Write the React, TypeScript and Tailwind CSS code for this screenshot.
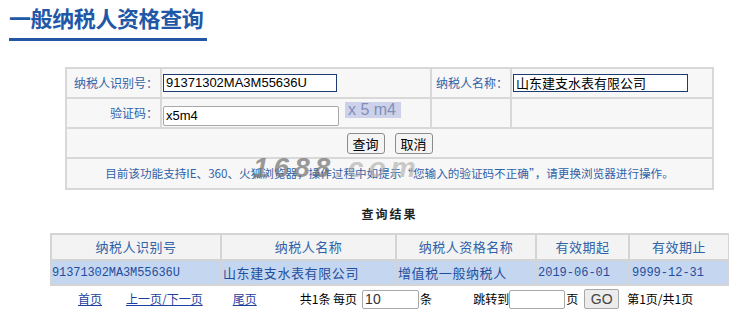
import React from "react";

const cjk = "font-['Noto_Sans_CJK_SC','Noto_Sans',sans-serif]";
const mono = "font-['Liberation_Mono','Noto_Sans_CJK_SC',monospace]";

const headers = ["纳税人识别号", "纳税人名称", "纳税人资格名称", "有效期起", "有效期止"];
const widths = ["w-[170px]", "w-[175px]", "w-[140px]", "w-[93px]", "w-[100px]"];

const App: React.FC = () => {
	return (
		<div className={`w-[729px] h-[331px] overflow-hidden bg-white ${cjk}`}>
			{/* Title */}
			<div className="pl-[9px] pt-[4px]">
				<h1 className="text-[22px] leading-[26px] font-bold text-[#1f58a6] tracking-[-0.4px]">
					一般纳税人资格查询
				</h1>
				<div className="mt-[8px] w-[198px] h-[3px] bg-[#2456a4]"></div>
			</div>

			{/* Query form */}
			<div className="relative ml-[65px] mt-[26px] w-[649px]">
				<table className="w-full border-collapse text-[12px] bg-[#f7f7f7]">
					<tbody>
						<tr className="h-[30px]">
							<td className="w-[95px] border-2 border-[#d8d8d8] text-right pr-[2px] text-[#2f62a8]">
								纳税人识别号：
							</td>
							<td className="w-[270px] border-2 border-[#d8d8d8] pl-[1px]">
								<div className="w-[174px] h-[18px] border border-[#1c3b6e] bg-white text-[13px] leading-[16px] pl-[2px] text-black font-['Liberation_Sans',sans-serif]">
									91371302MA3M55636U
								</div>
							</td>
							<td className="w-[80px] border-2 border-[#d8d8d8] text-right pr-[2px] text-[#2f62a8]">
								纳税人名称：
							</td>
							<td className="border-2 border-[#d8d8d8] pl-[1px]">
								<div className="w-[175px] h-[18px] border border-[#1c3b6e] bg-white text-[13px] leading-[16px] pl-[2px] text-black">
									山东建支水表有限公司
								</div>
							</td>
						</tr>
						<tr className="h-[30px]">
							<td className="border-2 border-[#d8d8d8] text-right pr-[2px] text-[#2f62a8]">
								验证码：
							</td>
							<td className="border-2 border-[#d8d8d8] pl-[1px]">
								<div className="flex items-start gap-[6px]">
									<div className="mt-[6px] w-[176px] h-[20px] border border-[#a8a8a8] rounded-[2px] bg-white text-[13px] leading-[18px] pl-[2px] text-black font-['Liberation_Sans',sans-serif]">
										x5m4
									</div>
									<div className="mt-[2px] w-[56px] h-[16px] bg-[#cdd2ea] text-[#7f8fb8] text-[16px] leading-[16px] font-light pl-[3px] whitespace-nowrap font-['Liberation_Sans',sans-serif]">
										x 5 m4
									</div>
								</div>
							</td>
							<td className="border-2 border-[#d8d8d8]"></td>
							<td className="border-2 border-[#d8d8d8]"></td>
						</tr>
						<tr className="h-[30px]">
							<td colSpan={4} className="border-2 border-[#d8d8d8]">
								<div className="flex justify-center gap-[10px]">
									<button className="w-[38px] h-[21px] border border-[#8c8c8c] rounded-[3px] bg-[#f4f4f4] text-[13px] leading-[19px] text-black">
										查询
									</button>
									<button className="w-[38px] h-[21px] border border-[#8c8c8c] rounded-[3px] bg-[#f4f4f4] text-[13px] leading-[19px] text-black">
										取消
									</button>
								</div>
							</td>
						</tr>
						<tr className="h-[31px]">
							<td colSpan={4} className="border-2 border-[#d8d8d8] text-center text-[#2f62a8] text-[11.6px]">
								目前该功能支持IE、360、火狐浏览器，操作过程中如提示“您输入的验证码不正确”，请更换浏览器进行操作。
							</td>
						</tr>
					</tbody>
				</table>
				{/* watermark */}
				<div className="absolute left-[188px] top-[86px] italic font-bold text-[28px] leading-[30px] tracking-[5px] whitespace-nowrap font-['Liberation_Sans',sans-serif] pointer-events-none">
					<span className="text-[#6e6e6e]/70">1688</span>
					<span className="text-[#a8a8a8]/60">.com</span>
				</div>
			</div>

			{/* Results */}
			<div className="ml-[50px] w-[679px]">
				<div className="mt-[17px] text-center text-[12px] font-bold text-[#222] tracking-[2px] leading-[14px]">
					查询结果
				</div>
				<table className="mt-[12px] w-full border-collapse table-fixed">
					<thead>
						<tr className="h-[26px] bg-[#f3f3f3]">
							{headers.map((h, i) => (
								<th
									key={h}
									className={`${widths[i]} border-2 border-[#d4d4d4] font-normal text-[13px] text-[#2f62a8] text-center tracking-[0.5px]`}
								>
									{h}
								</th>
							))}
						</tr>
					</thead>
					<tbody>
						<tr className="h-[25px] bg-[#c5d6f1] text-[#1f4f9c] text-[13px]">
							<td className={`border-2 border-[#d4d4d4] text-[12px] tracking-[-0.1px] ${mono}`}>
								91371302MA3M55636U
							</td>
							<td className="border-2 border-[#d4d4d4] pl-[1px] tracking-[0.6px]">山东建支水表有限公司</td>
							<td className="border-2 border-[#d4d4d4] pl-[1px] tracking-[0.6px]">增值税一般纳税人</td>
							<td className={`border-2 border-[#d4d4d4] pl-[1px] text-[12px] ${mono}`}>2019-06-01</td>
							<td className={`border-2 border-[#d4d4d4] pl-[2px] text-[12px] ${mono}`}>9999-12-31</td>
						</tr>
					</tbody>
				</table>
			</div>

			{/* Pagination */}
			<div className="flex items-center h-[22px] mt-[2px] text-[12px] text-black">
				<a className="ml-[78px] text-[#1f3f9e] underline">首页</a>
				<a className="ml-[24px] text-[#1f3f9e] underline">上一页/下一页</a>
				<a className="ml-[30px] text-[#1f3f9e] underline">尾页</a>
				<span className="ml-[43px]">共1条 每页</span>
				<div className="ml-[5px] w-[57px] h-[19px] border border-[#a8a8a8] rounded-[2px] text-[14px] leading-[17px] pl-[2px] text-[#333] font-['Liberation_Sans',sans-serif]">
					10
				</div>
				<span className="ml-[1px]">条</span>
				<span className="ml-[41px]">跳转到</span>
				<div className="w-[56px] h-[19px] border border-[#a8a8a8] rounded-[2px]"></div>
				<span className="ml-[1px]">页</span>
				<button className="ml-[6px] w-[35px] h-[20px] border border-[#a8a8a8] rounded-[2px] bg-[#ececec] text-[14px] leading-[18px] text-[#444] font-['Liberation_Sans',sans-serif]">
					GO
				</button>
				<span className="ml-[8px]">第1页/共1页</span>
			</div>
		</div>
	);
};

export default App;
